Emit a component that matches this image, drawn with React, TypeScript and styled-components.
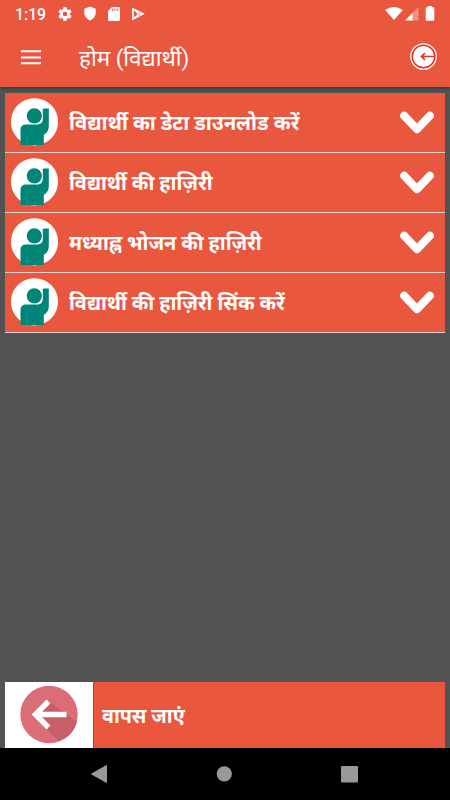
import React from "react";
import styled, { createGlobalStyle } from "styled-components";

const coral = "#e9573f";

const GlobalStyle = createGlobalStyle`
  * { box-sizing: border-box; }
  html, body { margin: 0; padding: 0; overflow: hidden; }
`;

const Screen = styled.div`
  width: 450px;
  height: 800px;
  display: flex;
  flex-direction: column;
  background: #535353;
  color: #fff;
  font-family: Roboto, "Noto Sans", "Noto Sans Devanagari", sans-serif;
  overflow: hidden;
`;

const Header = styled.header`
  flex: none;
  height: 87px;
  background: ${coral};
  box-shadow: 0 1px 4px rgba(10, 45, 55, 0.75);
`;

const StatusBar = styled.div`
  height: 27px;
  padding: 0 15px 0 15px;
  display: flex;
  align-items: center;
  justify-content: space-between;
`;

const StatusGroup = styled.div`
  height: 27px;
  display: flex;
  align-items: center;
`;

const Clock = styled.span`
  width: 42px;
  font-size: 15.8px;
  font-weight: 500;
  line-height: 27px;
  padding-top: 1px;
`;

const Glyph = styled.svg<{ $gap?: number }>`
  display: block;
  flex: none;
  margin-left: ${(p) => p.$gap ?? 0}px;
`;

const AppBar = styled.div`
  height: 60px;
  padding: 0 12px 0 18px;
  display: flex;
  align-items: center;
`;

const Title = styled.h1`
  flex: 1;
  margin: 2px 0 0 36px;
  font-size: 22.4px;
  font-weight: 400;
  line-height: 30px;
  white-space: nowrap;
`;

const Menu = styled.main`
  flex: 1;
  padding: 6px 5px 0;
`;

const Row = styled.div`
  height: 60px;
  padding: 0 10px 1px 6px;
  display: flex;
  align-items: center;
  background: ${coral};
  border-bottom: 1px solid #d8d3d0;
`;

const Label = styled.span<{ $stretch: number; $gap: number }>`
  flex: 1;
  margin-left: ${(p) => p.$gap}px;
  padding-top: 2px;
  font-size: 20px;
  font-weight: 700;
  line-height: 28px;
  white-space: nowrap;
  transform: scaleX(${(p) => p.$stretch});
  transform-origin: left;
`;

const BackRow = styled.div`
  flex: none;
  height: 66px;
  margin: 0 5px;
  display: flex;
  align-items: center;
  background: ${coral};
`;

const BackTile = styled.div`
  width: 89px;
  height: 66px;
  padding-left: 15px;
  display: flex;
  align-items: center;
  background: #fff;
  border-right: 1px solid #d23226;
`;

const NavBar = styled.nav`
  flex: none;
  height: 52px;
  padding: 0 92px 0 91px;
  display: flex;
  align-items: center;
  justify-content: space-between;
  background: #000;
`;

const Student = () => (
  <Glyph width="48" height="48" viewBox="0 0 48 48">
    <circle cx="23.5" cy="23.8" r="23.6" fill="#fff" />
    <g fill="#008577">
      <circle cx="23.3" cy="17.8" r="7.6" />
      <path d="M31.8 11.5Q31.8 10.5 33 10.5H37.8V28Q37.8 34 32.8 37V47H9.5V32Q9.5 26.5 15 26.5H27.5Q31.8 25.5 31.8 21Z" />
    </g>
    <path d="M16 36V46" stroke="#2c9b8f" strokeWidth="0.8" />
  </Glyph>
);

const Chevron = () => (
  <Glyph width="36" height="26" viewBox="0 0 36 26">
    <path d="M5.2 6.7L18 20.2L30.8 6.7" fill="none" stroke="#fff" strokeWidth="8" strokeLinecap="round" strokeLinejoin="round" />
  </Glyph>
);

const items = [
  { text: "विद्यार्थी का डेटा डाउनलोड करें", stretch: 1.014 },
  { text: "विद्यार्थी की हाज़िरी", stretch: 0.997 },
  { text: "मध्याह्न भोजन की हाज़िरी", stretch: 0.994 },
  { text: "विद्यार्थी की हाज़िरी सिंक करें", stretch: 0.996 },
];

export default function App() {
  return (
    <Screen>
      <GlobalStyle />
      <Header>
        <StatusBar>
          <StatusGroup>
            <Clock>1:19</Clock>
            <Glyph width="16" height="16" viewBox="0 0 24 24" fill="#fff">
              <path d="M19.4 13c.1-.3.1-.7.1-1s0-.7-.1-1l2.2-1.7c.2-.1.3-.4.1-.6l-2-3.5c-.1-.2-.4-.3-.6-.2l-2.5 1c-.5-.4-1.1-.7-1.7-1L14.5 2.4C14.5 2.2 14.2 2 14 2h-4c-.2 0-.5.2-.5.4L9.1 5c-.6.3-1.2.6-1.7 1l-2.5-1c-.2-.1-.5 0-.6.2l-2 3.5c-.1.2-.1.5.1.6L4.6 11c-.1.3-.1.7-.1 1s0 .7.1 1l-2.2 1.7c-.2.1-.2.4-.1.6l2 3.5c.1.2.4.3.6.2l2.5-1c.5.4 1.1.7 1.7 1l.4 2.6c0 .2.3.4.5.4h4c.2 0 .5-.2.5-.4l.4-2.6c.6-.3 1.2-.6 1.7-1l2.5 1c.2.1.5 0 .6-.2l2-3.5c.1-.2.1-.5-.1-.6L19.4 13zM12 15.5a3.5 3.5 0 1 1 0-7 3.5 3.5 0 0 1 0 7z" />
            </Glyph>
            <Glyph $gap={11} width="12" height="15" viewBox="0 0 12 15">
              <path d="M6 .5L11.7 2.8V6.5C11.7 10.5 9 13 6 14.5C3 13 .3 10.5 .3 6.5V2.8Z" fill="#fff" />
            </Glyph>
            <Glyph $gap={12} width="12" height="14" viewBox="0 0 12 14">
              <path d="M4 0H10.8Q12 0 12 1.2V12.8Q12 14 10.8 14H1.2Q0 14 0 12.8V4Z" fill="#fff" />
              <path d="M4.7 1.7V4M7 1.7V4M9.3 1.7V4" stroke={coral} strokeWidth="1" />
            </Glyph>
            <Glyph $gap={12} width="14" height="14" viewBox="0 0 14 14">
              <path fillRule="evenodd" d="M0 .4L12.8 6.8L0 13.6ZM1.8 3.3V10.7L5.7 7Z" fill="#fff" />
              <path d="M2 2L8.5 8.5M2 12L8.5 5.5" stroke="#fff" strokeWidth="1" />
              <path d="M8.5 4.7L6.4 7L8.5 9.2" stroke={coral} strokeWidth=".6" fill="none" />
            </Glyph>
          </StatusGroup>
          <StatusGroup>
            <Glyph width="18" height="14" viewBox="0 0 18 14">
              <path d="M.2 3Q9-3 17.8 3L9 13Z" fill="#fff" />
            </Glyph>
            <Glyph $gap={2} width="14" height="14" viewBox="0 0 14 14">
              <path d="M13.5 0V13.5H0Z" fill="#fff" opacity=".35" />
              <path d="M7.5 6V13.5H0Z" fill="#fff" />
            </Glyph>
            <Glyph $gap={6} width="10" height="15" viewBox="0 0 10 15">
              <path d="M3 0H7V1.2H8.5Q9.3 1.2 9.3 2V14Q9.3 14.8 8.5 14.8H1.5Q.7 14.8 .7 14V2Q.7 1.2 1.5 1.2H3Z" fill="#fff" />
            </Glyph>
          </StatusGroup>
        </StatusBar>
        <AppBar>
          <Glyph width="25" height="20" viewBox="0 0 25 20">
            <path d="M3 4.2H23M3 10.4H23M3 16.3H23" stroke="#fff" strokeWidth="2" />
          </Glyph>
          <Title>होम (विद्यार्थी)</Title>
          <Glyph width="28" height="28" viewBox="0 0 28 28">
            <circle cx="13.5" cy="13.5" r="13.3" fill="#fff" />
            <circle cx="13.5" cy="13.5" r="11.3" fill="none" stroke="#e02e20" strokeWidth="1.5" />
            <path d="M24.5 13.5H11.5M14.9 10.2L11.5 13.5L14.9 16.8" fill="none" stroke="#e23828" strokeWidth="1.7" />
          </Glyph>
        </AppBar>
      </Header>
      <Menu>
        {items.map((item) => (
          <Row key={item.text}>
            <Student />
            <Label $gap={10} $stretch={item.stretch}>{item.text}</Label>
            <Chevron />
          </Row>
        ))}
      </Menu>
      <BackRow>
        <BackTile>
          <Glyph width="58" height="58" viewBox="0 0 58 58">
            <circle cx="29" cy="28.5" r="28.7" fill="#da6d76" />
            <path d="M28.5 15L57 36A28.7 28.7 0 0 1 39 55.3L13 29Z" fill="#c85e68" />
            <path d="M46.5 28.5H16M28.5 15.5L15.5 28.5L28.5 41.5" fill="none" stroke="#fff" strokeWidth="5.4" />
          </Glyph>
        </BackTile>
        <Label $gap={8} $stretch={0.987}>वापस जाएं</Label>
      </BackRow>
      <NavBar>
        <Glyph width="16" height="18" viewBox="0 0 16 18">
          <path d="M15.5 .5V17.5L.5 9Z" fill="#999" stroke="#999" strokeLinejoin="round" />
        </Glyph>
        <Glyph width="16" height="16" viewBox="0 0 16 16">
          <circle cx="8.3" cy="7.8" r="7.6" fill="#999" />
        </Glyph>
        <Glyph width="17" height="17" viewBox="0 0 17 17">
          <rect width="17" height="16.5" rx="1" fill="#999" />
        </Glyph>
      </NavBar>
    </Screen>
  );
}
